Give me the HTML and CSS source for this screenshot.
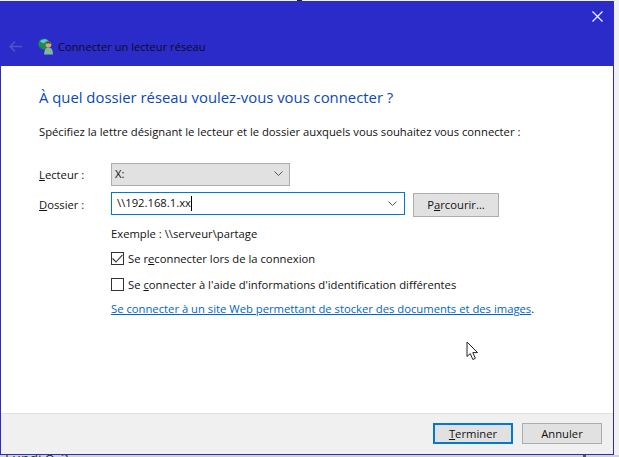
FILE: index.html
```html
<!DOCTYPE html>
<html lang="fr">
<head>
<meta charset="utf-8">
<title>Connecter un lecteur réseau</title>
<link rel="stylesheet" href="styles.css">
</head>
<body>
<div class="top-mark"></div>
<div class="window">
  <header class="titlebar">
    <div class="close-row">
      <svg class="close" width="11" height="11" viewBox="0 0 11 11"><path d="M0.5 0.5L10.5 10.5M10.5 0.5L0.5 10.5" stroke="#fff" stroke-width="1.1" fill="none"/></svg>
    </div>
    <div class="nav-row">
      <svg class="back" width="13" height="11" viewBox="0 0 13 11"><path d="M6 0.6L1.2 5.5L6 10.4M1.2 5.5H13" stroke="#5052cc" stroke-width="1.6" fill="none"/></svg>
      <svg class="netdrive" width="17" height="17" viewBox="0 0 17 17">
        <circle cx="6" cy="6" r="5.6" fill="#1f8f3f"/>
        <path d="M2 3.5C4 0.8 8 0.5 10 2.6C8 3 7.5 4.8 6 5C4.5 5.3 3.5 4.2 2 3.5Z" fill="#5fc2ea"/>
        <path d="M1 8C2.5 8.5 4 9.5 5 11.5C3 11.5 1.5 10 1 8Z" fill="#1b5fb8"/>
        <circle cx="10.5" cy="6.5" r="2.9" fill="#d3a77e"/>
        <path d="M7.6 5.8C7.8 3.4 13 3 13.4 6C12 5 9 5 7.6 5.8Z" fill="#4b3a2a"/>
        <path d="M6.2 16.5C6.2 11.5 8 9.6 10.5 9.6C13 9.6 15 11.5 15 16.5Z" fill="#7fb89a"/>
      </svg>
      <span class="window-title">Connecter un lecteur réseau</span>
    </div>
  </header>
  <main class="content">
    <h1 class="heading">À quel dossier réseau voulez-vous vous connecter ?</h1>
    <p class="intro">Spécifiez la lettre désignant le lecteur et le dossier auxquels vous souhaitez vous connecter :</p>
    <div class="form-row drive-row">
      <label class="field-label"><u>L</u>ecteur :</label>
      <div class="select">
        <span>X:</span>
        <svg class="chev" width="9" height="5" viewBox="0 0 9 5"><path d="M0.5 0.5L4.5 4.5L8.5 0.5" stroke="#555" fill="none"/></svg>
      </div>
    </div>
    <div class="form-row folder-row">
      <label class="field-label"><u>D</u>ossier :</label>
      <div class="combo">
        <span class="combo-text">\\192.168.1.xx</span><span class="caret"></span>
        <svg class="chev" width="9" height="5" viewBox="0 0 9 5"><path d="M0.5 0.5L4.5 4.5L8.5 0.5" stroke="#555" fill="none"/></svg>
      </div>
      <button class="btn browse">P<u>a</u>rcourir...</button>
    </div>
    <div class="details">
      <div class="example">Exemple : \\serveur\partage</div>
      <div class="check first">
        <span class="box"><svg width="11" height="9" viewBox="0 0 11 9"><path d="M0.5 4.5L4 8L10.5 0.8" stroke="#333" stroke-width="1.1" fill="none"/></svg></span>
        <span>Se r<u>e</u>connecter lors de la connexion</span>
      </div>
      <div class="check second">
        <span class="box"></span>
        <span>Se <u>c</u>onnecter à l'aide d'informations d'identification différentes</span>
      </div>
      <div class="link-row"><a class="link" href="#">Se connecter à un site Web permettant de stocker des documents et des images</a>.</div>
    </div>
    <svg class="pointer" width="13" height="20" viewBox="0 0 13 20"><path d="M1 1V15.5L4.3 12.6L6.8 18.5L9.4 17.3L6.8 11.6H11.6Z" fill="#fff" stroke="#222" stroke-width="1"/></svg>
  </main>
  <footer class="actions">
    <button class="btn primary"><u>T</u>erminer</button>
    <button class="btn">Annuler</button>
  </footer>
</div>
<div class="behind">Lundi ⟳ 2<span class="bottom-mark"></span></div>
</body>
</html>
```
FILE: styles.css
```css
* { box-sizing: border-box; }
html, body { margin: 0; padding: 0; }
body {
  width: 619px;
  height: 457px;
  overflow: hidden;
  background: #f1f1f1;
  font-family: "Open Sans", "Noto Sans", sans-serif;
  font-size: 11.25px;
  color: #111;
  padding-top: 1px;
  position: relative;
}
.top-mark {
  position: absolute;
  left: 297px;
  top: 0;
  width: 5px;
  height: 1px;
  background: #222;
}
.window {
  width: 614px;
  height: 454px;
  border: 1px solid #2b2bc9;
  border-top: 0;
  display: flex;
  flex-direction: column;
  background: #fff;
}
.titlebar {
  height: 65px;
  background: #2b2bc9;
  display: flex;
  flex-direction: column;
  flex: none;
}
.close-row {
  display: flex;
  justify-content: flex-end;
  padding: 10px 10px 0 0;
  height: 30px;
}
.nav-row {
  display: flex;
  align-items: center;
  height: 30px;
  padding-left: 8px;
}
.back { margin-right: 16px; }
.netdrive { margin-right: 3px; }
.window-title { font-size: 11.15px; color: #0c0c1a; }
.content { flex: 1; position: relative; padding: 20px 0 0 38px; }
.heading {
  margin: 0;
  font-weight: 400;
  font-size: 14.85px;
  line-height: 22px;
  color: #0a48b8;
}
.intro { margin: 16px 0 0; line-height: 16px; }
.form-row { display: flex; align-items: center; }
.drive-row { margin-top: 23px; height: 23px; }
.folder-row { margin-top: 6px; height: 24px; }
.field-label { width: 72px; flex: none; }
.select {
  width: 179px;
  height: 23px;
  background: #e1e1e1;
  border: 1px solid #adadad;
  display: flex;
  align-items: center;
  justify-content: space-between;
  padding: 0 6px 2px 3px;
}
.combo {
  width: 294px;
  height: 23px;
  margin-top: -1px;
  border: 1px solid #0078d7;
  display: flex;
  align-items: center;
  padding: 0 7px 1px 5px;
}
.combo-text { line-height: 16px; }
.caret { width: 1px; height: 15px; background: #000; }
.combo .chev { margin-left: auto; }
.btn {
  font: inherit;
  color: #111;
  height: 21px;
  background: #e1e1e1;
  border: 1px solid #adadad;
  padding: 0;
  width: 80px;
}
.browse { margin: 1px 0 0 8px; width: 86px; height: 24px; }
.details { padding: 10px 0 0 72px; }
.example { line-height: 16px; }
.check { display: flex; align-items: center; gap: 4px; height: 16px; }
.check.first { margin-top: 8px; }
.check.second { margin-top: 10px; }
.box {
  width: 13px;
  height: 13px;
  border: 1px solid #333;
  background: #fff;
  display: flex;
  align-items: center;
  justify-content: center;
  flex: none;
}
.link-row { margin-top: 9px; line-height: 16px; }
.link { color: #0066cc; }
.pointer { position: absolute; left: 465px; top: 275px; }
.actions {
  height: 41px;
  flex: none;
  background: #f0f0f0;
  border-top: 1px solid #e0e0e0;
  display: flex;
  justify-content: flex-end;
  align-items: flex-start;
  gap: 9px;
  padding: 9px 11px 0 0;
}
.primary { border: 2px solid #0078d7; }
.behind {
  height: 2px;
  overflow: hidden;
  padding-left: 5px;
  font-size: 14px;
  line-height: 8px;
  color: #333;
  background: #d2d2d2;
  position: relative;
}
.bottom-mark {
  position: absolute;
  left: 583px;
  top: 0;
  width: 3px;
  height: 2px;
  background: #555;
}
```
